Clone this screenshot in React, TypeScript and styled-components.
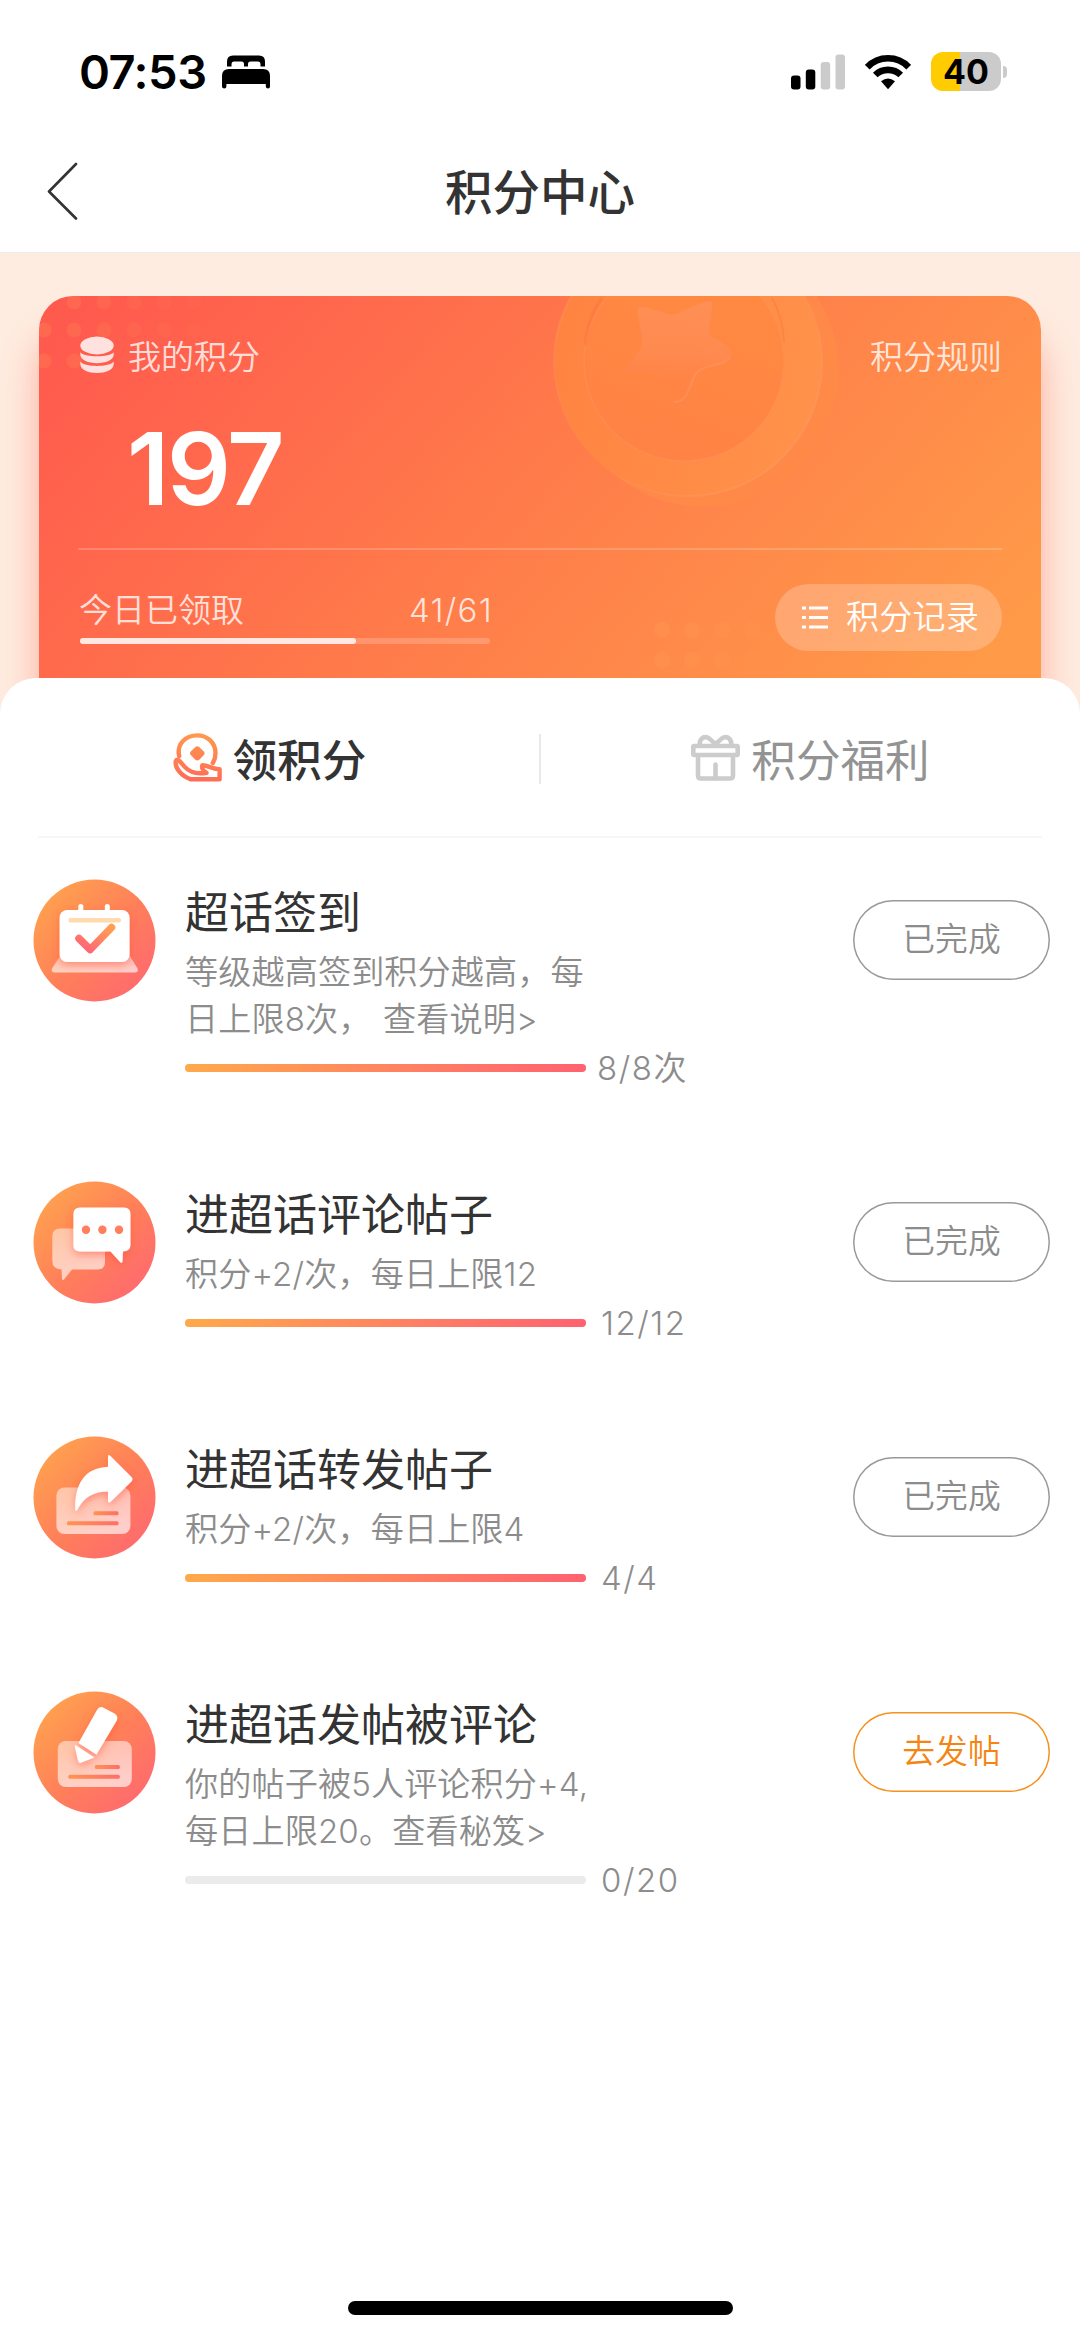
import React from "react";
import styled, { createGlobalStyle } from "styled-components";

const GlobalStyle = createGlobalStyle`
  * { box-sizing: border-box; }
  body {
    margin: 0;
    background: #fff;
    font-family: "Noto Sans CJK SC", sans-serif;
    -webkit-font-smoothing: antialiased;
  }
`;

const Screen = styled.main`
  display: flex;
  flex-direction: column;
  width: 1080px;
  height: 2337px;
  overflow: hidden;
  background: #fff;
`;

const StatusBar = styled.header`
  display: flex;
  flex: none;
  align-items: center;
  justify-content: space-between;
  height: 130px;
  padding: 13px 73px 0 79px;
`;

const StatusGroup = styled.div<{ $gap: number }>`
  display: flex;
  align-items: center;
  gap: ${(p) => p.$gap}px;
`;

const Clock = styled.span`
  font: 600 47px/56px Inter, sans-serif;
  letter-spacing: -0.5px;
  color: #000;
`;

const Battery = styled.div`
  display: flex;
  align-items: center;
  gap: 2px;
`;

const BatteryBody = styled.div`
  display: flex;
  align-items: center;
  justify-content: center;
  width: 70px;
  height: 39px;
  border-radius: 12px;
  background: linear-gradient(90deg, #ffcc00 41.5%, #cbcbcb 41.5%);
  font: 700 34px/39px Inter, sans-serif;
  color: #000;
`;

const BatteryNub = styled.div`
  width: 4px;
  height: 12px;
  border-radius: 0 4px 4px 0;
  background: #cbcbcb;
`;

const NavBar = styled.nav`
  display: grid;
  flex: none;
  grid-template-columns: 1fr auto 1fr;
  align-items: center;
  height: 123px;
  padding: 0 46px;
  border-bottom: 1px solid #ececec;
`;

const NavTitle = styled.h1`
  margin: 0 0 3px;
  font-size: 47.5px;
  font-weight: 500;
  line-height: 60px;
  color: #333;
`;

const Hero = styled.section`
  flex: none;
  height: 465px;
  padding: 43px 39px 0;
  background: #feece0;
`;

const Card = styled.div`
  position: relative;
  height: 422px;
  padding: 39px 39px 0;
  border-radius: 34px;
  background: linear-gradient(132deg, #ff5a4e 4%, #ff7d4a 50%, #ff9a49 92%);
  box-shadow: 0 40px 36px rgba(255, 88, 66, 0.42);
  color: #fff;
`;

const CardArt = styled.svg`
  position: absolute;
  inset: 0;
  border-radius: 34px;
`;

const CardContent = styled.div`
  position: relative;
`;

const CardTop = styled.div`
  display: flex;
  align-items: center;
  justify-content: space-between;
  height: 40px;
  font-size: 33px;
  font-weight: 350;
  line-height: 40px;
  color: rgba(255, 255, 255, 0.8);
`;

const CardLabel = styled.div`
  display: flex;
  align-items: center;
  gap: 14px;
  padding-left: 2px;
`;

const Points = styled.div`
  margin: 44px 0 29px 49px;
  font: 560 100px/100px Inter, sans-serif;
  letter-spacing: -2.2px;
`;

const CardRule = styled.div`
  height: 2px;
  background: rgba(255, 255, 255, 0.2);
`;

const CardBottom = styled.div`
  display: flex;
  align-items: flex-start;
  justify-content: space-between;
`;

const Today = styled.div`
  width: 412px;
  padding: 38px 0 0 1px;
`;

const TodayText = styled.div`
  display: flex;
  justify-content: space-between;
  font-size: 33px;
  font-weight: 350;
  line-height: 40px;
  color: rgba(255, 255, 255, 0.8);
`;

const TodayCount = styled.span`
  margin-right: -3px;
  padding-top: 2px;
  font-family: Inter, sans-serif;
  letter-spacing: 1.3px;
`;

const TodayTrack = styled.div`
  height: 6px;
  margin: 8px 0 0 1px;
  border-radius: 3px;
  background: rgba(255, 255, 255, 0.2);
`;

const TodayFill = styled.div`
  height: 6px;
  border-radius: 3px;
  background: rgba(255, 255, 255, 0.8);
`;

const RecordButton = styled.button`
  display: flex;
  align-items: center;
  gap: 18px;
  width: 227px;
  height: 67px;
  margin-top: 34px;
  padding: 0 0 5px 27px;
  border: 0;
  border-radius: 34px;
  background: rgba(255, 255, 255, 0.22);
  font-family: inherit;
  font-size: 33px;
  font-weight: 350;
  letter-spacing: 0.3px;
  white-space: nowrap;
  color: #fff;
`;

const ListGlyph = styled.svg`
  margin-top: 4px;
`;

const Sheet = styled.section`
  position: relative;
  flex: none;
  margin-top: -40px;
  border-radius: 36px 36px 0 0;
  background: #fff;
`;

const Tabs = styled.div`
  display: flex;
  align-items: center;
  height: 158px;
`;

const Tab = styled.div<{ $active?: boolean }>`
  display: flex;
  flex: 1;
  align-items: center;
  justify-content: center;
  gap: 11px;
  padding-top: 1px;
  font-size: 44.6px;
  font-weight: ${(p) => (p.$active ? 500 : 400)};
  line-height: 60px;
  color: ${(p) => (p.$active ? "#333" : "#939393")};
`;

const TabDivider = styled.div`
  width: 2px;
  height: 50px;
  margin-top: 4px;
  background: #e9e9e9;
`;

const SheetRule = styled.div`
  height: 2px;
  margin: 0 38px;
  background: #f6f6f6;
`;

const TaskList = styled.ul`
  display: flex;
  flex-direction: column;
  gap: 89px;
  margin: 0;
  padding: 41px 30px 0 33px;
  list-style: none;
`;

const Task = styled.li`
  display: grid;
  grid-template-columns: 123px 1fr 197px;
  column-gap: 29px;
  align-items: start;
`;

const TaskTitle = styled.h2`
  margin: 0 0 8px;
  font-size: 44px;
  font-weight: 400;
  line-height: 62px;
  color: #333;
`;

const TaskText = styled.p`
  margin: 0 0 1px;
  font-family: Inter, "Noto Sans CJK SC", sans-serif;
  font-size: 33.1px;
  font-weight: 350;
  letter-spacing: 0.15px;
  line-height: 47px;
  white-space: pre;
  word-spacing: 2px;
  color: #8c8c8c;
`;

const Progress = styled.div<{ $gap: number }>`
  display: flex;
  align-items: center;
  gap: ${(p) => p.$gap}px;
  height: 48px;
`;

const Track = styled.div`
  width: 401px;
  height: 8px;
  border-radius: 4px;
  background: #ebebeb;
`;

const Fill = styled.div`
  height: 8px;
  border-radius: 4px;
  background: linear-gradient(90deg, #ffa94a, #ff7d64 60%, #ff6270);
`;

const Count = styled.span`
  font-family: Inter, "Noto Sans CJK SC", sans-serif;
  font-size: 33px;
  font-weight: 350;
  line-height: 48px;
  letter-spacing: 1.5px;
  color: #8c8c8c;
`;

const Action = styled.button<{ $primary?: boolean }>`
  height: 80px;
  margin-top: 21px;
  padding: 0 0 7px;
  border: 0;
  border-radius: 40px;
  box-shadow: inset 0 0 0 1.5px ${(p) => (p.$primary ? "#f5911e" : "#999")};
  background: #fff;
  font-family: inherit;
  font-size: 32.8px;
  font-weight: 350;
  color: ${(p) => (p.$primary ? "#f58512" : "#8c8c8c")};
`;

const HomeIndicator = styled.div`
  flex: none;
  width: 385px;
  height: 14px;
  margin: auto auto 22px;
  border-radius: 7px;
  background: #000;
`;

const BedIcon = () => (
  <svg width="48" height="34" viewBox="0 0 48 34">
    <path d="M5 11V6.500Q5 .5 11 .5H37Q43 .5 43 6.500V11.500H38.500V9.500Q38.500 6.500 36 6.500H28.500Q26 6.500 26 9V11.500H22V9Q22 6.500 19.500 6.500H12Q9.500 6.500 9.500 9.500V11.500H5Z" />
    <path d="M0 21Q0 14 7 14H41Q48 14 48 21V31.500Q48 33.500 46 33.500T43.800 31.500V29H4.400V31.500Q4.400 33.500 2.200 33.500T0 31.500Z" />
  </svg>
);

const SignalIcon = () => (
  <svg width="54" height="36" viewBox="0 0 54 36">
    <rect x="0" y="21.500" width="9.500" height="14" rx="3" />
    <rect x="14.800" y="15.500" width="9.500" height="20" rx="3" />
    <rect x="29.700" y="8" width="9.500" height="27.500" rx="3" fill="#cbcbcb" />
    <rect x="44.500" y="0.500" width="9.500" height="35" rx="3" fill="#cbcbcb" />
  </svg>
);

const WifiIcon = () => (
  <svg width="46" height="36" viewBox="0 0 46 36" fill="none" stroke="#000" strokeWidth="6.600">
    <path d="M2.300 13.200C13.500 1.300 32.500 1.300 43.700 13.200" />
    <path d="M10.300 21C17.200 14.100 28.800 14.100 35.700 21" />
    <path d="M16 27.300Q23 21.500 30 27.300L23 35.200Z" fill="#000" stroke="none" />
  </svg>
);

const BackIcon = () => (
  <svg width="32" height="58" viewBox="0 0 32 58" fill="none" stroke="#333" strokeWidth="2.600" strokeLinecap="round" strokeLinejoin="round">
    <path d="M30 2L3 29.500L30 56.500" />
  </svg>
);

const CoinsIcon = () => (
  <svg width="34" height="38" viewBox="0 0 34 38" fill="#fff" fillOpacity="0.82">
    <ellipse cx="17" cy="9.500" rx="16.700" ry="9" />
    <path d="M.3 16.200C4 21.500 30 21.500 33.700 16.200V18.500C33.700 30 .3 30 .3 18.500Z" />
    <path d="M.3 25.600C4 31.500 30 31.500 33.700 25.600V28C33.700 40 .3 40 .3 28Z" />
  </svg>
);

const HandCoinIcon = () => (
  <svg width="49" height="49" viewBox="0 0 49 49" fill="none" stroke="url(#tabTint)" strokeWidth="4.400" strokeLinejoin="round" strokeLinecap="round">
    <defs>
      <linearGradient id="tabTint" gradientUnits="userSpaceOnUse" x1="24" y1="0" x2="20" y2="48">
        <stop offset="0" stopColor="#ff9a4c" />
        <stop offset="1" stopColor="#ff6b57" />
      </linearGradient>
    </defs>
    <path d="M6.200 23C3.500 11.500 12 2.400 24.300 2.400C34.500 2.400 42.500 10 42.500 20C42.500 24 41.600 27.200 39.800 30" />
    <path d="M22.100 14.300Q24.300 12 26.500 14.300L30.600 18.300Q32.600 20.300 30.600 22.300L26.500 26.500Q24.300 28.500 22.100 26.500L18 22.300Q16 20.300 18 18.300Z" fill="url(#tabTint)" stroke="none" />
    <path d="M2.800 28C1.500 34.500 8 43 18 46.300H46.600V36.200C40 36.200 35.500 32.600 29.500 32.200C28 34.800 30.500 38 33.500 39.800C24 41.300 16 38.600 11.500 33.600L7 28.500C5 26.300 3.300 26.300 2.800 28Z" />
  </svg>
);

const GiftIcon = () => (
  <svg width="49" height="48" viewBox="0 0 49 48" fill="none" stroke="#ccc" strokeWidth="4.600" strokeLinejoin="round" strokeLinecap="round">
    <rect x="2.300" y="12" width="44.400" height="9" rx="1" />
    <path d="M7 22V41.500Q7 44.500 10 44.500H39Q42 44.500 42 41.500V22" />
    <path d="M24.500 30.500V44" />
    <path d="M8.800 11.500C8 5.500 12 2.600 15.500 3.200C18.500 3.700 21.500 7.500 24.500 10.500C27.500 7.500 30.500 3.700 33.500 3.200C37 2.600 41 5.500 40.200 11.500" />
  </svg>
);

const CardBackdrop = () => (
  <CardArt width="1002" height="422" viewBox="39 296 1002 422">
    <defs>
      <linearGradient id="coinRim" x1="0" y1="0.300" x2="1" y2="0.500">
        <stop offset="0" stopColor="#ff8341" />
        <stop offset="1" stopColor="#ff924a" />
      </linearGradient>
      <linearGradient id="coinFace" x1="0.200" y1="1" x2="0.600" y2="0">
        <stop offset="0" stopColor="#ff8245" />
        <stop offset="1" stopColor="#ff8a41" />
      </linearGradient>
      <linearGradient id="starFill" x1="0.500" y1="0" x2="0.450" y2="1">
        <stop offset="0" stopColor="#ff8f56" />
        <stop offset="0.500" stopColor="#ff8a50" />
        <stop offset="0.900" stopColor="#ff8148" stopOpacity="0.200" />
      </linearGradient>
      <linearGradient id="rimEdge" x1="0" y1="0" x2="1" y2="1">
        <stop offset="0" stopColor="#ff945a" stopOpacity="0.600" />
        <stop offset="0.500" stopColor="#ff945a" stopOpacity="0" />
        <stop offset="0.900" stopColor="#ff945a" />
      </linearGradient>
    </defs>
    <circle cx="703" cy="371" r="136" fill="#ff8b47" opacity="0.700" />
    <circle cx="688" cy="362" r="134" fill="url(#coinRim)" stroke="url(#rimEdge)" strokeWidth="2" />
    <circle cx="684" cy="361" r="100" fill="url(#coinFace)" stroke="#ff9158" strokeOpacity="0.500" strokeWidth="1.500" />
    <path d="M585 345Q588 316 602 298" fill="none" stroke="#ff7240" strokeWidth="3" opacity="0.450" />
    <path d="M772 298Q783 318 784 342" fill="none" stroke="#ff7c3e" strokeWidth="2" opacity="0.600" />
    <path d="M638 314Q636 306 644 307L668 314Q674 316 680 312L704 302Q713 298 712 307L709 330Q709 335 714 338L726 345Q733 350 730 357Q727 362 718 364L704 368Q697 370 694 377L687 394Q683 402 674 402L657 376Q652 372 643 373L626 374Q620 373 627 367L640 350Q643 345 642 337Z" fill="url(#starFill)" />
    <path d="M730 357Q727 362 718 364L704 368Q697 370 694 377L687 394Q683 402 674 402" fill="none" stroke="#ff9562" strokeWidth="2" opacity="0.600" />
    {[0, 1, 2, 3, 4, 5].map((i) => (
      <g key={i} fill="#ff8055" opacity={0.4 - i * 0.06}>
        {i > 0 && <circle cx={44 + i * 30} cy="302" r="7.500" />}
        <circle cx={44 + i * 30} cy="330" r="7.500" />
        {i < 2 && <circle cx={44 + i * 30} cy="361" r="7.500" />}
      </g>
    ))}
    {[0, 1, 2, 3, 4].map((i) => (
      <g key={i} fill="#ff9a4e" opacity={0.4 - i * 0.08}>
        <circle cx={662 + i * 30} cy="630" r="8" />
        <circle cx={662 + i * 30} cy="660" r="8" />
      </g>
    ))}
  </CardArt>
);

type IconKind = "calendar" | "chat" | "share" | "pen";

const glyphs: Record<IconKind, React.ReactNode> = {
  calendar: (
    <>
      <path d="M27 77H97L104.500 89.500Q106 93.500 101.500 93.500H22Q17.500 93.500 19 89.500Z" fill="url(#glass)" />
      <g fill="#fff">
        <rect x="26.600" y="31" width="70" height="52" rx="7.500" filter="url(#lift)" />
        <rect x="45.300" y="25" width="5" height="12" rx="2.500" />
        <rect x="71.800" y="25" width="5" height="12" rx="2.500" />
      </g>
      <rect x="35.500" y="39" width="52.500" height="4.400" rx="2" fill="#ffdaaf" />
      <path d="M46 59.500L57.200 70.500L78.500 48.500" fill="none" stroke="url(#mark)" strokeWidth="7.500" strokeLinecap="round" strokeLinejoin="round" />
    </>
  ),
  chat: (
    <>
      <path d="M27 47.500H65Q72 47.500 72 55V81Q72 88.500 64.500 88.500H39L31 98.500Q29.300 100 29 97.500L28.500 88.500Q19.300 88 19.300 80V55.500Q19.300 47.500 27 47.500Z" fill="url(#glass)" />
      <path d="M47 26.500H91Q97.500 26.500 97.500 33V64Q97.500 70 90 70.500L89.500 80.500Q89 83 87 81L77.500 70.500H47Q40.400 70.500 40.400 64V33Q40.400 26.500 47 26.500Z" fill="#fff" filter="url(#lift)" />
      {[53, 69.4, 86].map((cx) => (
        <circle key={cx} cx={cx} cy="48.800" r="4.200" fill="#ff7e5c" />
      ))}
    </>
  ),
  share: (
    <>
      <rect x="23.400" y="51.500" width="74" height="46.500" rx="8" fill="url(#glass)" />
      <rect x="60.500" y="75.300" width="25" height="4" rx="1.500" fill="url(#lines)" />
      <rect x="34" y="85.300" width="51.500" height="4" rx="1.500" fill="url(#lines)" />
      <path d="M75 21Q75 17.500 77.500 20L98.500 41Q100.500 43.200 98.500 45.400L78 65.500Q75 68 75 64.500V55.500C61 55.500 51 61 44.500 73.500Q42.500 76.500 42.200 73C42 48 51 32 75 30.700Z" fill="#fff" filter="url(#lift)" />
    </>
  ),
  pen: (
    <>
      <rect x="24.800" y="50" width="74" height="46" rx="8" fill="url(#glass)" />
      <rect x="61.800" y="74" width="25" height="4" rx="1.500" fill="url(#lines)" />
      <rect x="35.300" y="83.800" width="51.500" height="4" rx="1.500" fill="url(#lines)" />
      <g fill="#fff" filter="url(#lift)">
        <path d="M45.500 52L64 19Q66.500 14.500 71 17L81.500 22.500Q86 25.500 83.500 30L63.500 63.500Z" />
        <path d="M43.200 54.500L61.300 66.500L48.500 71.500Q45.500 72.500 45 69.500L42 56.500Q41.500 53.500 43.200 54.500Z" />
      </g>
    </>
  ),
};

const TaskIcon = ({ kind }: { kind: IconKind }) => (
  <svg width="123" height="123" viewBox="0 0 123 123">
    <defs>
      <linearGradient id="disc" x1="0.100" y1="0.150" x2="0.850" y2="0.900">
        <stop offset="0" stopColor="#ffa04f" />
        <stop offset="0.550" stopColor="#ff7e5a" />
        <stop offset="1" stopColor="#ff6b6e" />
      </linearGradient>
      <linearGradient id="glass" x1="0" y1="0" x2="0.300" y2="1">
        <stop offset="0" stopColor="#fff" stopOpacity="0.480" />
        <stop offset="1" stopColor="#fff" stopOpacity="0.650" />
      </linearGradient>
      <linearGradient id="mark" x1="1" y1="0" x2="0.200" y2="1">
        <stop offset="0" stopColor="#ffa050" />
        <stop offset="1" stopColor="#ff6676" />
      </linearGradient>
      <linearGradient id="lines">
        <stop offset="0" stopColor="#ff9450" />
        <stop offset="1" stopColor="#ff6e68" />
      </linearGradient>
      <filter id="lift" x="-30%" y="-30%" width="160%" height="170%">
        <feDropShadow dx="0" dy="3" stdDeviation="4" floodColor="#ff4a30" floodOpacity="0.500" />
      </filter>
    </defs>
    <circle cx="61.500" cy="61.500" r="61" fill="url(#disc)" />
    {glyphs[kind]}
  </svg>
);

interface TaskData {
  kind: IconKind;
  title: string;
  text: string;
  done: number;
  total: number;
  unit?: string;
  action: string;
  open?: boolean;
}

const tasks: TaskData[] = [
  { kind: "calendar", title: "超话签到", text: "等级越高签到积分越高，每\n日上限8次，\u00a0查看说明>", done: 8, total: 8, unit: "次", action: "已完成" },
  { kind: "chat", title: "进超话评论帖子", text: "积分+2/次，每日上限12", done: 12, total: 12, action: "已完成" },
  { kind: "share", title: "进超话转发帖子", text: "积分+2/次，每日上限4", done: 4, total: 4, action: "已完成" },
  { kind: "pen", title: "进超话发帖被评论", text: "你的帖子被5人评论积分+4,\n每日上限20。查看秘笈>", done: 0, total: 20, action: "去发帖", open: true },
];

export default function App() {
  return (
    <Screen>
      <GlobalStyle />
      <StatusBar>
        <StatusGroup $gap={15}>
          <Clock>07:53</Clock>
          <BedIcon />
        </StatusGroup>
        <StatusGroup $gap={20}>
          <SignalIcon />
          <WifiIcon />
          <Battery>
            <BatteryBody>40</BatteryBody>
            <BatteryNub />
          </Battery>
        </StatusGroup>
      </StatusBar>
      <NavBar>
        <BackIcon />
        <NavTitle>积分中心</NavTitle>
      </NavBar>
      <Hero>
        <Card>
          <CardBackdrop />
          <CardContent>
            <CardTop>
              <CardLabel>
                <CoinsIcon />
                我的积分
              </CardLabel>
              <span>积分规则</span>
            </CardTop>
            <Points>197</Points>
            <CardRule />
            <CardBottom>
              <Today>
                <TodayText>
                  <span>今日已领取</span>
                  <TodayCount>41/61</TodayCount>
                </TodayText>
                <TodayTrack>
                  <TodayFill style={{ width: `${(41 / 61) * 100}%` }} />
                </TodayTrack>
              </Today>
              <RecordButton>
                <ListGlyph width="26" height="24" viewBox="0 0 26 24" stroke="#fff" strokeWidth="3">
                  <path d="M0 3H4M7 3H26M0 12.500H4M7 12.500H26M0 22H4M7 22H26" />
                </ListGlyph>
                积分记录
              </RecordButton>
            </CardBottom>
          </CardContent>
        </Card>
      </Hero>
      <Sheet>
        <Tabs>
          <Tab $active>
            <HandCoinIcon />
            领积分
          </Tab>
          <TabDivider />
          <Tab>
            <GiftIcon />
            积分福利
          </Tab>
        </Tabs>
        <SheetRule />
        <TaskList>
          {tasks.map((t) => (
            <Task key={t.title}>
              <TaskIcon kind={t.kind} />
              <div>
                <TaskTitle>{t.title}</TaskTitle>
                <TaskText>{t.text}</TaskText>
                <Progress $gap={t.unit ? 11 : 15}>
                  <Track>
                    <Fill style={{ width: `${(t.done / t.total) * 100}%` }} />
                  </Track>
                  <Count>
                    {t.done}/{t.total}
                    {t.unit}
                  </Count>
                </Progress>
              </div>
              <Action $primary={t.open}>{t.action}</Action>
            </Task>
          ))}
        </TaskList>
      </Sheet>
      <HomeIndicator />
    </Screen>
  );
}
